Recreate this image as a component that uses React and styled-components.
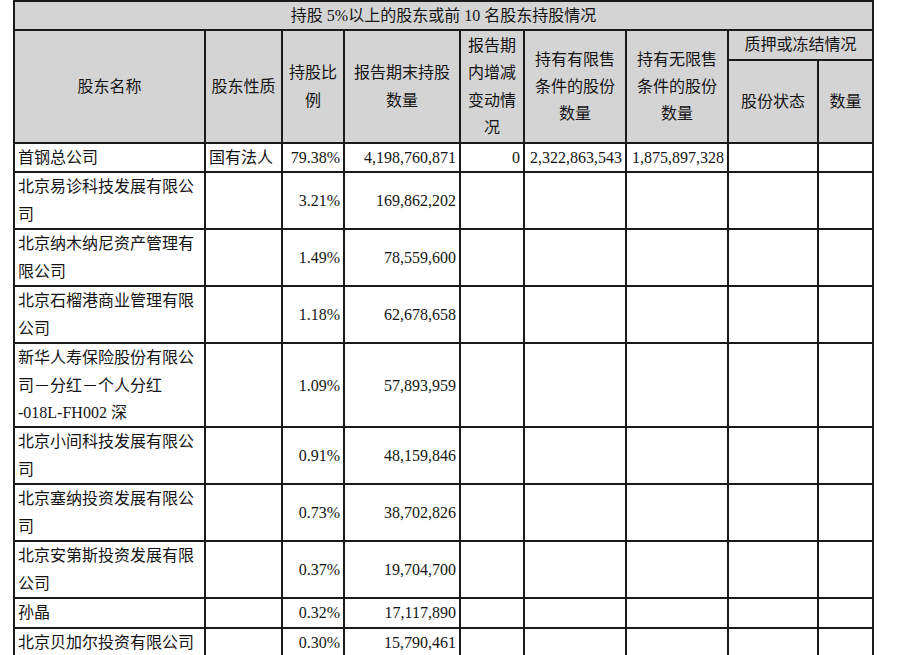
import React from "react";
import styled, { createGlobalStyle } from "styled-components";

const Global = createGlobalStyle`
  html, body {
    margin: 0;
    padding: 0;
    background: #ffffff;
    overflow: hidden;
  }
  body {
    font-family: "Liberation Serif", "Noto Sans CJK SC", serif;
    color: #141414;
  }
`;

const Page = styled.div`
  padding: 0 0 0 13px;
`;

const Table = styled.table`
  border-collapse: collapse;
  table-layout: fixed;
  width: 861px;
  font-size: 16px;
  line-height: 27.45px;
`;

const HeadCell = styled.th`
  background: #d4d4d4;
  border: 2px solid #1a1a1a;
  font-weight: normal;
  text-align: center;
  vertical-align: middle;
  padding: 0 3px;
  height: ${(p) => (p.$h ? `${p.$h}px` : "auto")};
`;

const Cell = styled.td`
  background: #ffffff;
  border: 2px solid #1a1a1a;
  padding: 0 3px;
  vertical-align: middle;
  text-align: ${(p) => (p.$align === "right" ? "right" : "left")};
  white-space: nowrap;
`;

const Line = styled.div`
  display: block;
`;

const widths = [191, 77, 62, 116, 64, 102, 102, 90, 55];

const rows = [
  { name: ["首钢总公司"], kind: "国有法人", pct: "79.38%", qty: "4,198,760,871", chg: "0", lim: "2,322,863,543", unl: "1,875,897,328" },
  { name: ["北京易诊科技发展有限公", "司"], pct: "3.21%", qty: "169,862,202" },
  { name: ["北京纳木纳尼资产管理有", "限公司"], pct: "1.49%", qty: "78,559,600" },
  { name: ["北京石榴港商业管理有限", "公司"], pct: "1.18%", qty: "62,678,658" },
  { name: ["新华人寿保险股份有限公", "司－分红－个人分红", "-018L-FH002 深"], pct: "1.09%", qty: "57,893,959" },
  { name: ["北京小间科技发展有限公", "司"], pct: "0.91%", qty: "48,159,846" },
  { name: ["北京塞纳投资发展有限公", "司"], pct: "0.73%", qty: "38,702,826" },
  { name: ["北京安第斯投资发展有限", "公司"], pct: "0.37%", qty: "19,704,700" },
  { name: ["孙晶"], pct: "0.32%", qty: "17,117,890" },
  { name: ["北京贝加尔投资有限公司"], pct: "0.30%", qty: "15,790,461" },
];

export default function App() {
  return (
    <Page>
      <Global />
      <Table>
        <colgroup>
          {widths.map((w, i) => (
            <col key={i} style={{ width: w }} />
          ))}
        </colgroup>
        <thead>
          <tr>
            <HeadCell colSpan={9} $h={23}>
              持股 5%以上的股东或前 10 名股东持股情况
            </HeadCell>
          </tr>
          <tr>
            <HeadCell rowSpan={2}>股东名称</HeadCell>
            <HeadCell rowSpan={2}>股东性质</HeadCell>
            <HeadCell rowSpan={2}>持股比例</HeadCell>
            <HeadCell rowSpan={2}>报告期末持股数量</HeadCell>
            <HeadCell rowSpan={2}>报告期内增减变动情况</HeadCell>
            <HeadCell rowSpan={2}>持有有限售条件的股份数量</HeadCell>
            <HeadCell rowSpan={2}>持有无限售条件的股份数量</HeadCell>
            <HeadCell colSpan={2} $h={27}>质押或冻结情况</HeadCell>
          </tr>
          <tr>
            <HeadCell $h={81}>股份状态</HeadCell>
            <HeadCell $h={81}>数量</HeadCell>
          </tr>
        </thead>
        <tbody>
          {rows.map((r, i) => (
            <tr key={i}>
              <Cell>
                {r.name.map((l, j) => (
                  <Line key={j}>{l}</Line>
                ))}
              </Cell>
              <Cell>{r.kind || ""}</Cell>
              <Cell $align="right">{r.pct}</Cell>
              <Cell $align="right">{r.qty}</Cell>
              <Cell $align="right">{r.chg || ""}</Cell>
              <Cell $align="right">{r.lim || ""}</Cell>
              <Cell $align="right">{r.unl || ""}</Cell>
              <Cell />
              <Cell />
            </tr>
          ))}
        </tbody>
      </Table>
    </Page>
  );
}
